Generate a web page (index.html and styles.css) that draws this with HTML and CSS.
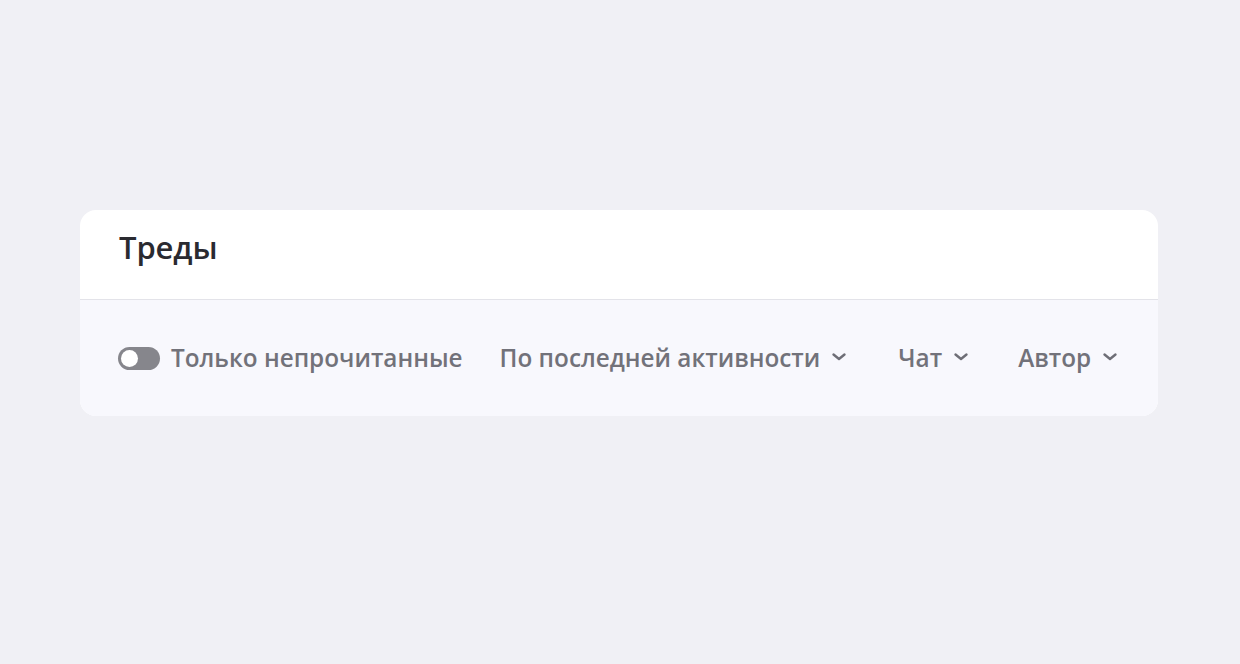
FILE: index.html
```html
<!DOCTYPE html>
<html lang="ru">
<head>
<meta charset="utf-8">
<link rel="stylesheet" href="styles.css">
</head>
<body>
<div class="card">
  <div class="header"><h1 class="title">Треды</h1></div>
  <div class="filters">
    <label class="toggle-item">
      <span class="toggle"><span class="knob"></span></span>
      <span class="label">Только непрочитанные</span>
    </label>
    <div class="dropdown sort">
      <span class="label">По последней активности</span>
      <svg class="chev" viewBox="0 0 16 10" width="16" height="10"><path d="M2.5 2.5l5.5 4.5 5.5-4.5" fill="none" stroke="currentColor" stroke-width="2.4" stroke-linecap="round" stroke-linejoin="round"/></svg>
    </div>
    <div class="dropdown chat">
      <span class="label">Чат</span>
      <svg class="chev" viewBox="0 0 16 10" width="16" height="10"><path d="M2.5 2.5l5.5 4.5 5.5-4.5" fill="none" stroke="currentColor" stroke-width="2.4" stroke-linecap="round" stroke-linejoin="round"/></svg>
    </div>
    <div class="dropdown author">
      <span class="label">Автор</span>
      <svg class="chev" viewBox="0 0 16 10" width="16" height="10"><path d="M2.5 2.5l5.5 4.5 5.5-4.5" fill="none" stroke="currentColor" stroke-width="2.4" stroke-linecap="round" stroke-linejoin="round"/></svg>
    </div>
  </div>
</div>
</body>
</html>
```

FILE: styles.css
```css
html, body {
  margin: 0;
  padding: 0;
}
body {
  background: #f0f0f5;
  font-family: "Open Sans", "Noto Sans", sans-serif;
  width: 1240px;
  height: 664px;
  overflow: hidden;
}
.card {
  margin: 210px 0 0 80px;
  width: 1078px;
  background: #ffffff;
  border-radius: 16px;
  overflow: hidden;
}
.header {
  height: 90px;
  border-bottom: 1px solid #e3e3e9;
  display: flex;
  align-items: center;
  padding: 0 39px;
  box-sizing: border-box;
}
.title {
  margin: -16px 0 0 0;
  font-size: 31px;
  font-weight: 600;
  color: #2a2a30;
  letter-spacing: -0.1px;
}
.filters {
  height: 116px;
  background: #f8f8fd;
  display: flex;
  align-items: center;
  padding: 0 38px;
  box-sizing: border-box;
  color: #72727a;
  font-size: 24.3px;
  font-weight: 600;
}
.label {
  line-height: 32px;
  white-space: nowrap;
}
.toggle-item {
  display: flex;
  align-items: center;
  gap: 11px;
}
.toggle {
  width: 42px;
  height: 23px;
  border-radius: 12px;
  background: #86868c;
  display: flex;
  align-items: center;
  padding: 0 3px;
  box-sizing: border-box;
}
.knob {
  width: 17px;
  height: 17px;
  border-radius: 50%;
  background: #ffffff;
}
.dropdown {
  display: flex;
  align-items: center;
  gap: 11px;
}
.chev {
  color: #6e6e76;
  margin-top: -3px;
}
.sort { margin-left: 37px; }
.chat { margin-left: 51px; }
.author { margin-left: 49px; }
```
